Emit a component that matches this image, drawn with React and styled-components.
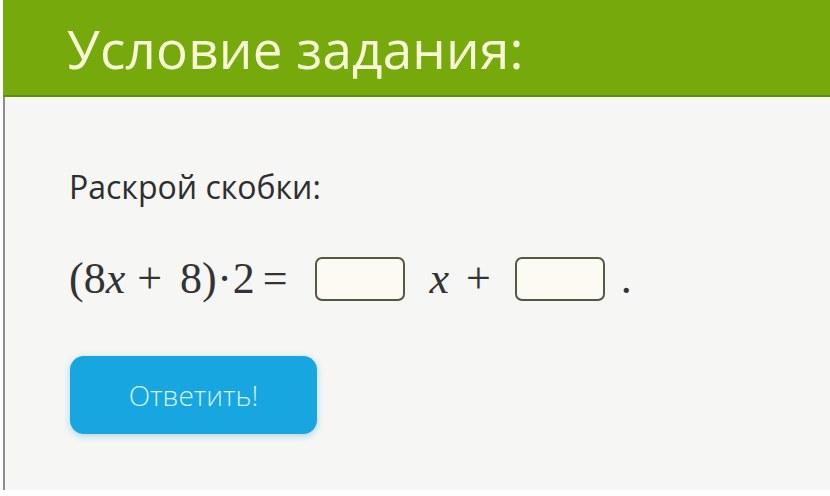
import React from "react";
import styled, { createGlobalStyle } from "styled-components";

const Global = createGlobalStyle`
  html, body { margin: 0; padding: 0; background: #fdfdfd; }
  body { font-family: "Open Sans", "Noto Sans", sans-serif; }
`;

const Page = styled.div`
  width: 830px;
  height: 496px;
  box-sizing: border-box;
  padding: 0 0 6px 3px;
  background: #fdfdfd;
`;

const Card = styled.div`
  height: 100%;
  display: flex;
  flex-direction: column;
  background: #f6f6f5;
  border-left: 2px solid #8d8d8d;
`;

const Header = styled.div`
  height: 97px;
  box-sizing: border-box;
  padding: 15px 0 0 64px;
  background: #76a90b;
  border-bottom: 2px solid #5f8f06;
  margin-left: -2px;
`;

const Title = styled.h1`
  margin: 0;
  font-size: 53px;
  line-height: 1.3;
  font-weight: 400;
  color: #f8f8d6;
  letter-spacing: 0.2px;
`;

const Body = styled.div`
  display: flex;
  flex-direction: column;
  align-items: flex-start;
  padding: 68px 0 0 64px;
`;

const Task = styled.p`
  margin: 0;
  font-size: 32px;
  line-height: 1.362;
  color: #2e2e2e;
`;

const MathRow = styled.div`
  display: flex;
  align-items: center;
  height: 48px;
  margin-top: 46px;
  font-family: "Liberation Serif", "DejaVu Serif", serif;
  font-size: 44px;
  line-height: 48px;
  color: #333;
`;

const Var = styled.i`
  font-style: italic;
`;

const Gap = styled.span`
  display: inline-block;
  width: ${(p) => p.$w}px;
`;

const Dot = styled.span`
  display: inline-block;
  width: 16px;
  text-align: center;
`;

const Blank = styled.span`
  display: inline-block;
  width: 90px;
  height: 44px;
  box-sizing: border-box;
  border: 2px solid #55583e;
  border-radius: 7px;
  background: #fbfbf3;
`;

const Button = styled.button`
  margin-top: 53px;
  margin-left: 1px;
  width: 247px;
  height: 78px;
  border: none;
  border-radius: 14px;
  background: #18a6e0;
  box-shadow: 0 2px 7px rgba(20, 160, 220, 0.35);
  color: #d6f2fb;
  font-family: "Open Sans", "Noto Sans", sans-serif;
  font-size: 28px;
  font-weight: 300;
`;

export default function App() {
  return (
    <Page>
      <Global />
      <Card>
        <Header>
          <Title>Условие задания:</Title>
        </Header>
        <Body>
          <Task>Раскрой скобки:</Task>
          <MathRow>
            <span>(8</span>
            <Var>x</Var>
            <Gap $w={12} />
            <span>+</span>
            <Gap $w={18} />
            <span>8)</span>
            <Dot>·</Dot>
            <span>2</span>
            <Gap $w={8} />
            <span>=</span>
            <Gap $w={27} />
            <Blank />
            <Gap $w={25} />
            <Var>x</Var>
            <Gap $w={17} />
            <span>+</span>
            <Gap $w={24} />
            <Blank />
            <Gap $w={16} />
            <span>.</span>
          </MathRow>
          <Button>Ответить!</Button>
        </Body>
      </Card>
    </Page>
  );
}
